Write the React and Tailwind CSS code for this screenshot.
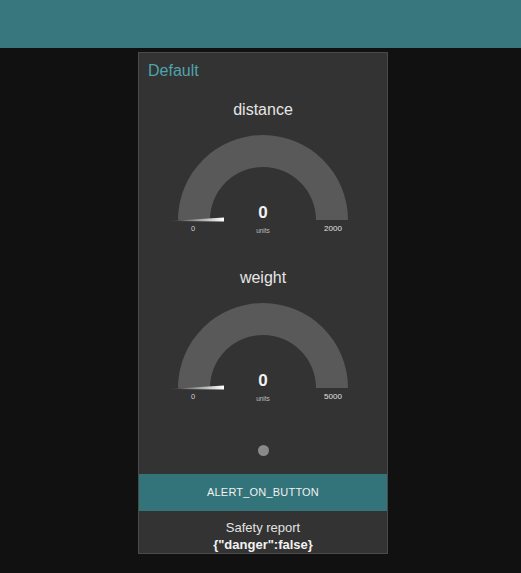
import React from 'react';

function Gauge({ title, max }) {
  return (
    <div>
      <div className="h-[44px] flex items-center justify-center pt-[2px] text-[16px] text-[#e6e6e6]">{title}</div>
      <svg width="248" height="124" viewBox="0 0 248 124" className="block">
        <defs>
          <linearGradient id={`needle-${title}`} x1="0" x2="1" y1="0" y2="0">
            <stop offset="0" stopColor="#333333" />
            <stop offset="1" stopColor="#ffffff" />
          </linearGradient>
        </defs>
        <path d="M 39 89 A 85 85 0 0 1 209 89 L 177 89 A 53 53 0 0 0 71 89 Z" fill="#595959" />
        <polygon points="30,90 85,86.5 85,90.5" fill={`url(#needle-${title})`} />
        <text x="124" y="87" textAnchor="middle" fontSize="17" fontWeight="bold" fill="#f2f2f2" fontFamily="Liberation Sans, sans-serif">0</text>
        <text x="124" y="102" textAnchor="middle" fontSize="6.5" fill="#bdbdbd" fontFamily="Liberation Sans, sans-serif">units</text>
        <text x="54" y="100" textAnchor="middle" fontSize="7.5" fill="#cfcfcf" fontFamily="Liberation Sans, sans-serif">0</text>
        <text x="194" y="100" textAnchor="middle" fontSize="8" fill="#e0e0e0" fontFamily="Liberation Sans, sans-serif">{max}</text>
      </svg>
    </div>
  );
}

export default function App() {
  return (
    <div className="min-h-[573px] bg-[#111111] font-['Liberation_Sans',Arial,sans-serif]">
      <div className="h-12 bg-[#38777d]" />
      <div className="mt-[4px] ml-[138px] w-[250px] h-[502px] border border-[#4a4a4a] bg-[#333333]">
        <div className="h-[34px] flex items-center pl-[9px] pt-[2px] text-[16px] text-[#4fa3ab]">Default</div>
        <Gauge title="distance" max="2000" />
        <Gauge title="weight" max="5000" />
        <div className="h-[51px] flex items-center justify-center pt-[3px]">
          <div className="w-[11px] h-[11px] rounded-full bg-[#8a8a8a]" />
        </div>
        <div className="h-[37px] bg-[#33747a] flex items-center justify-center text-[11px] text-[#f0f0f0] tracking-[0.2px]">
          ALERT_ON_BUTTON
        </div>
        <div className="pt-[8px] text-center text-[13px] leading-[17px] text-[#e2e2e2]">
          <div>Safety report</div>
          <div className="font-bold text-[#f2f2f2]">{'{"danger":false}'}</div>
        </div>
      </div>
    </div>
  );
}
